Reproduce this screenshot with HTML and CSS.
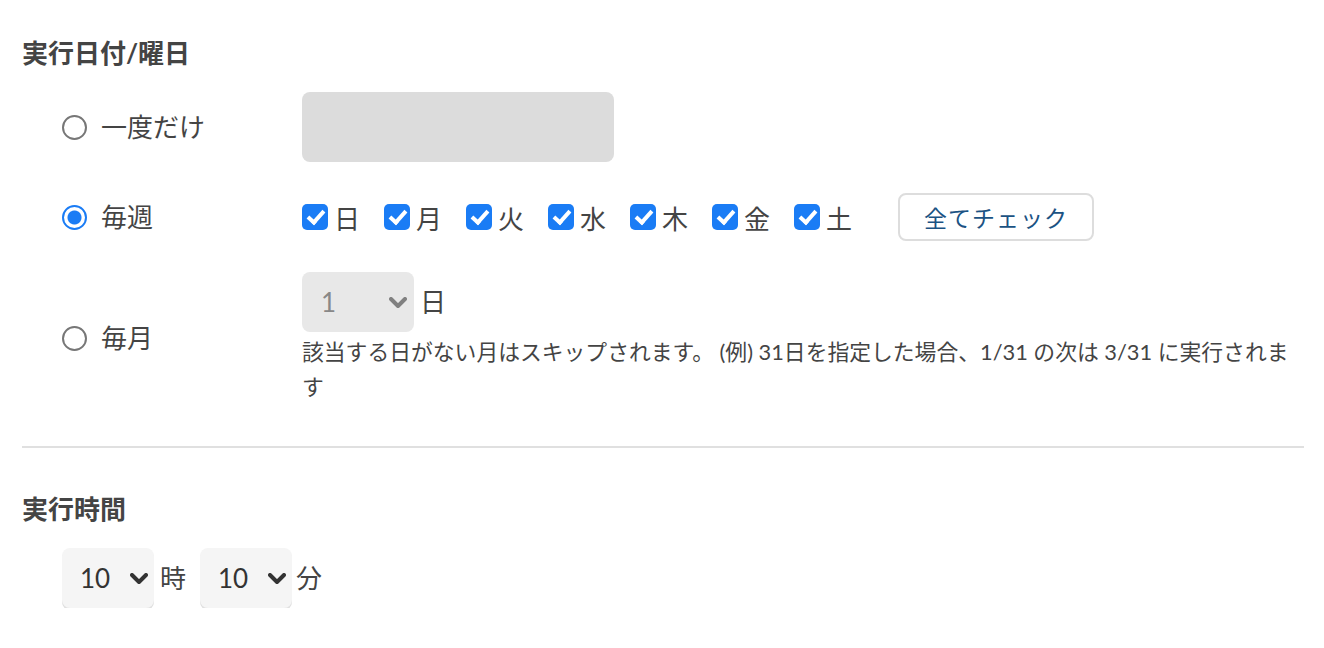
FILE: index.html
```html
<!DOCTYPE html>
<html lang="ja">
<head>
  <meta charset="utf-8">
  <title>実行スケジュール</title>
  <link rel="stylesheet" href="styles.css">
</head>
<body>

<div class="page">

  <section class="block">
    <h2 class="block-title">実行日付/曜日</h2>

    <div class="opts">
      <label class="opt-label">
        <input type="radio" name="freq" class="radio">
        <span>一度だけ</span>
      </label>
      <div class="opt-body">
        <div class="date-box"></div>
      </div>

      <label class="opt-label">
        <input type="radio" name="freq" class="radio" checked>
        <span>毎週</span>
      </label>
      <div class="opt-body week">
        <label class="day"><input type="checkbox" class="check" checked><span>日</span></label>
        <label class="day"><input type="checkbox" class="check" checked><span>月</span></label>
        <label class="day"><input type="checkbox" class="check" checked><span>火</span></label>
        <label class="day"><input type="checkbox" class="check" checked><span>水</span></label>
        <label class="day"><input type="checkbox" class="check" checked><span>木</span></label>
        <label class="day"><input type="checkbox" class="check" checked><span>金</span></label>
        <label class="day"><input type="checkbox" class="check" checked><span>土</span></label>
        <button type="button" class="btn">全てチェック</button>
      </div>

      <label class="opt-label">
        <input type="radio" name="freq" class="radio">
        <span>毎月</span>
      </label>
      <div class="opt-body">
        <div class="inline">
          <span class="sel sel-day">
            <select disabled><option>1</option></select>
            <svg class="chev" viewBox="0 0 18 12"><path d="M2 2 L9 9 L16 2"/></svg>
          </span>
          <span class="unit">日</span>
        </div>
        <p class="note">該当する日がない月はスキップされます。 (例) 31日を指定した場合、1/31 の次は 3/31 に実行されます</p>
      </div>
    </div>
  </section>

  <hr class="rule">

  <section class="block">
    <h2 class="block-title">実行時間</h2>
    <div class="time">
      <span class="sel sel-time">
        <select><option>10</option></select>
        <svg class="chev" viewBox="0 0 18 12"><path d="M2 2 L9 9 L16 2"/></svg>
      </span>
      <span class="unit">時</span>
      <span class="sel sel-time">
        <select><option>10</option></select>
        <svg class="chev" viewBox="0 0 18 12"><path d="M2 2 L9 9 L16 2"/></svg>
      </span>
      <span class="unit">分</span>
    </div>
  </section>

</div>

</body>
</html>
```

FILE: styles.css
```css
html, body {
  margin: 0;
  padding: 0;
  background: #fff;
  color: #444;
  font-family: Lato, "Noto Sans CJK JP", sans-serif;
}

.page { padding: 37px 20px 0 22px; }

.block-title {
  margin: 0;
  font-size: 26px;
  line-height: 32px;
  font-weight: bold;
  color: #444;
}

/* options grid: radio column + content column */
.opts {
  display: grid;
  grid-template-columns: 240px 1fr;
  row-gap: 31px;
  align-items: center;
  margin: 23px 0 0 40px;
}

.opt-label {
  display: flex;
  align-items: center;
  gap: 14px;
  font-size: 26px;
  line-height: 32px;
}

.radio {
  appearance: none;
  -webkit-appearance: none;
  margin: 0;
  width: 25px;
  height: 25px;
  border: 2px solid #777;
  border-radius: 50%;
  box-sizing: border-box;
  background: #fff;
}
.radio:checked {
  border-color: #1a7cf5;
  background: radial-gradient(circle, #1a7cf5 0 6.5px, #fff 7.5px);
}

.date-box {
  width: 312px;
  height: 70px;
  background: #dcdcdc;
  border-radius: 8px;
}

.week {
  display: flex;
  align-items: center;
  gap: 24px;
}
.day {
  display: flex;
  align-items: center;
  gap: 6px;
  font-size: 26px;
  line-height: 32px;
}
.day span { margin-top: 3px; }

.check {
  appearance: none;
  -webkit-appearance: none;
  margin: 0;
  width: 26px;
  height: 26px;
  border-radius: 5px;
  background: #1a7cf5;
  position: relative;
}
.check:checked::after {
  content: "";
  position: absolute;
  left: 9px;
  top: 3px;
  width: 6px;
  height: 13px;
  border: solid #fff;
  border-width: 0 4px 4px 0;
  transform: rotate(42deg);
}

.btn {
  margin-left: 22px;
  width: 196px;
  height: 48px;
  background: #fff;
  border: 2px solid #ddd;
  border-radius: 8px;
  font-family: Lato, "Noto Sans CJK JP", sans-serif;
  font-size: 23px;
  letter-spacing: 1px;
  color: #1b5283;
  padding: 0;
}

.inline {
  display: flex;
  align-items: center;
  gap: 6px;
}
.unit {
  font-size: 26px;
  line-height: 32px;
}

.sel {
  position: relative;
  display: inline-block;
}
.sel select {
  appearance: none;
  -webkit-appearance: none;
  border: 0;
  margin: 0;
  font-family: Lato, "Noto Sans CJK JP", sans-serif;
  font-size: 26px;
  border-radius: 8px;
  display: block;
}
.chev {
  position: absolute;
  top: 50%;
  width: 18px;
  height: 12px;
  margin-top: -5px;
  fill: none;
  stroke-width: 4;
  stroke-linecap: round;
  stroke-linejoin: round;
  pointer-events: none;
}

.sel-day select {
  width: 112px;
  height: 60px;
  padding: 0 0 0 19px;
  background: #e8e8e8;
  color: #888;
  opacity: 1;
}
.sel-day .chev { right: 7px; stroke: #808080; }

.note {
  margin: 2px 0 0;
  font-size: 21.8px;
  line-height: 35px;
}

.rule {
  margin: 42px 0 0;
  border: 0;
  border-top: 2px solid #e0e0e0;
}

.block + .rule + .block { padding-top: 45px; }

.time {
  display: flex;
  align-items: center;
  margin: 23px 0 0 40px;
}
.sel-time select {
  width: 92px;
  height: 60px;
  padding: 0 0 0 18px;
  background: #f5f5f5;
  color: #333;
  box-shadow: 0 2px 0 #e0e0e0;
}
.sel-time .chev { right: 6px; stroke: #333; }
.time .unit { margin: 0 14px 0 6px; }
.time .unit:last-child { margin: 0 0 0 4px; }
```
